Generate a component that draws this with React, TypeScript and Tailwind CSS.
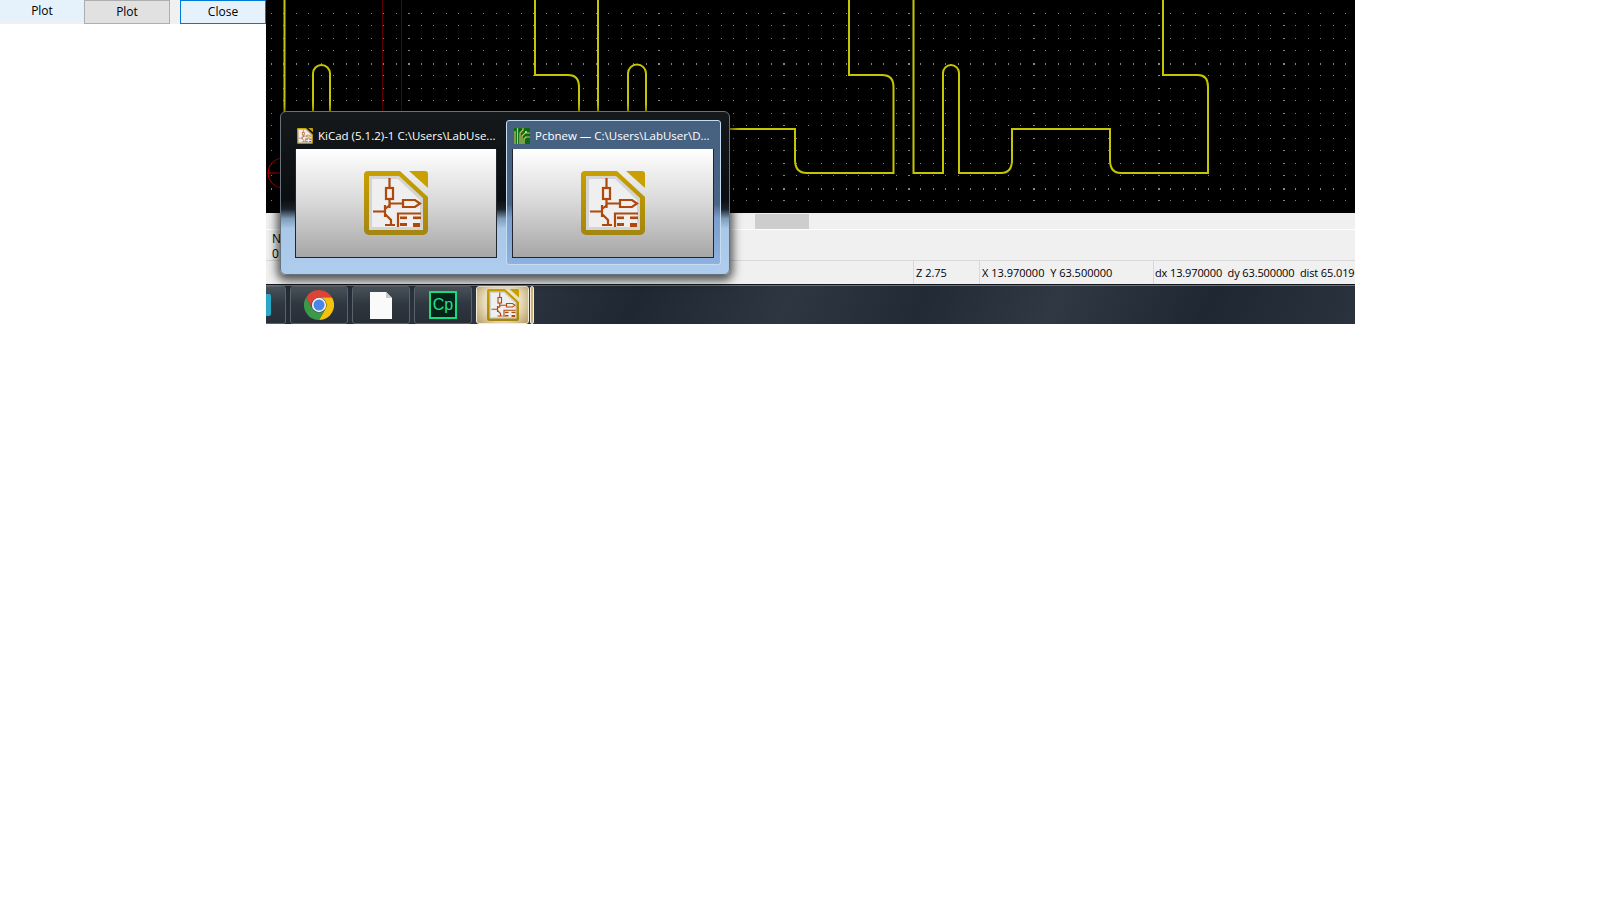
import React from "react";

const FONT = "font-['Open_Sans','Liberation_Sans',sans-serif]";

// kicad grid is 12.5px, every 10th column/row is drawn a bit heavier
const gridPath = () => {
  let d = "";
  for (let i = 0; i < 88; i++) {
    for (let j = 1; j < 18; j++) {
      const x = Math.round(5 + i * 12.49);
      const y = Math.round(j * 12.5);
      const w = i % 10 === 1 ? 2 : 1;
      const h = j % 10 === 5 ? 2 : 1;
      d += `M${x} ${y}h${w}v${h}h-${w}z`;
    }
  }
  return d;
};

const KicadIcon = ({ className }: { className: string }) => (
  <svg viewBox="0 0 64 64" className={className}>
    <defs>
      <linearGradient id="kicadGold" x1="0" y1="0" x2="0" y2="1">
        <stop offset="0" stopColor="#c9a000" />
        <stop offset="1" stopColor="#a38610" />
      </linearGradient>
    </defs>
    <path d="M4 0H36L64 26V59a5 5 0 0 1-5 5H5a5 5 0 0 1-5-5V4a4 4 0 0 1 4-4Z" fill="url(#kicadGold)" />
    <path d="M45 0H61a3 3 0 0 1 3 3V17Z" fill="#c9a000" />
    <path d="M5 5H35L59 27V59H5Z" fill="#d4d4d4" />
    <path d="M8 8H34L56 29V56H8Z" fill="#efefef" />
    <g fill="none" stroke="#b0480c" strokeWidth="2.2">
      <path d="M25.5 7V17M25.5 28V37M25 32.5H39" />
      <rect x="22" y="17" width="7" height="11" />
      <path d="M39 29H51L56 32.5L51 36H39Z" />
      <path d="M9 40.5H21M21 34V46M21 38L26 34M21 43L27 49V54M21 54H31" />
      <path d="M34 56V42.5H57" />
    </g>
    <g fill="#b0480c">
      <rect x="36" y="45.5" width="7" height="2.6" />
      <rect x="49" y="45.5" width="8" height="2.6" />
      <rect x="36" y="52" width="7" height="3" />
      <rect x="49" y="52" width="7" height="4" />
    </g>
  </svg>
);

const PcbIcon = () => (
  <svg viewBox="0 0 16 16" className="h-4 w-4 shrink-0">
    <rect width="16" height="16" fill="#0b6b14" />
    <path d="M1 16V3M3.5 16V0M6 16V5L9 2V0M8 16V8L11 5H16M11 9H16M10 16V11L12 9" fill="none" stroke="#c9c06a" strokeWidth="1.2" />
    <circle cx="12" cy="4" r="1" fill="#e8e2a0" />
  </svg>
);

const ChromeIcon = () => (
  <svg viewBox="0 0 48 48" className="h-[30px] w-[30px]">
    <path d="M24 0A24 24 0 0 1 44.8 12H24A12 12 0 0 0 13.6 30L3.2 12A24 24 0 0 1 24 0Z" fill="#db4437" />
    <path d="M44.8 12A24 24 0 0 1 24 48L34.4 30A12 12 0 0 0 24 12Z" fill="#f4c20d" />
    <path d="M3.2 12L13.6 30A12 12 0 0 0 34.4 30L24 48A24 24 0 0 1 3.2 12Z" fill="#3a9a4a" />
    <circle cx="24" cy="24" r="11.5" fill="#f1f1f1" />
    <circle cx="24" cy="24" r="8.8" fill="#4a86e8" />
  </svg>
);

const DocIcon = () => (
  <svg viewBox="0 0 22 27" className="h-[27px] w-[22px]">
    <path d="M0 0H16L22 6V27H0Z" fill="#fafafa" />
    <path d="M16 0V6H22Z" fill="#c9c9c9" />
  </svg>
);

const Preview = ({ title, icon, selected }: { title: string; icon: React.ReactNode; selected?: boolean }) => (
  <div
    className={
      selected
        ? "flex h-[145px] w-[215px] flex-col rounded-[3px] border border-[#c6dcf2] bg-[linear-gradient(180deg,#46607f_0%,#4a6485_58%,#7d9fcd_68%,#8fb1e0_100%)] pt-[7px] pl-[5px]"
        : "flex h-[145px] w-[215px] flex-col pt-2 pl-[5px]"
    }
  >
    <div className="ml-[2px] flex h-4 w-[200px] items-center gap-[5px] overflow-visible text-[11.5px] whitespace-nowrap text-white">
      {icon}
      <span>{title}</span>
    </div>
    <div className="mt-[5px] flex h-[109px] w-[202px] items-center justify-center border border-[#20262c] border-t-0 bg-[linear-gradient(180deg,#ffffff_0%,#d8d8d8_50%,#a6a6a6_100%)]">
      <KicadIcon className="h-16 w-16" />
    </div>
  </div>
);

const TaskButton = ({ children, className }: { children?: React.ReactNode; className: string }) => (
  <div
    className={`flex h-[38px] shrink-0 items-center justify-center rounded-[3px] border border-[#5a626a] bg-[linear-gradient(180deg,#4a525a_0%,#2f3740_45%,#272e36_100%)] ${className}`}
  >
    {children}
  </div>
);

export default function App() {
  return (
    <div className={`flex min-h-[910px] w-[1610px] items-start bg-white text-[12px] text-black ${FONT}`}>
      {/* Plot dialog buttons left over on the left */}
      <div className="flex h-[24px] w-[266px] bg-[#f0f0f0]">
        <div className="flex h-[22px] w-[84px] items-center justify-center bg-[#e5f1fb]">Plot</div>
        <button className="h-[24px] w-[86px] border border-[#adadad] bg-[#e1e1e1]">Plot</button>
        <button className="ml-[10px] h-[24px] w-[86px] border border-[#0078d7] bg-[#e5f1fb]">Close</button>
      </div>

      <div className="relative flex h-[324px] w-[1089px] flex-col">
        {/* pcb canvas */}
        <svg viewBox="0 0 1089 213" className="h-[213px] w-[1089px] shrink-0 bg-black">
          <path d={gridPath()} fill="#858585" shapeRendering="crispEdges" />
          <path d="M116.5 0V112M135.5 0V112" stroke="#5e0000" fill="none" />
          <path d="M17 158A15 15 0 0 0 17 188M2 173H15" stroke="#c80000" fill="none" />
          <g fill="none" stroke="#c6c600" strokeWidth="2">
            <path d="M18.5 0V112" />
            <path d="M47 112V73.5A8.5 8.5 0 0 1 64 73.5V112" />
            <path d="M269 0V75H302Q313 75 313 87V112" />
            <path d="M332 0V112" />
            <path d="M362 112V73.5A9 9 0 0 1 380 73.5V112" />
            <path d="M440 129H529V160Q529 173 541 173H627.5V87Q627.5 75 616 75H583V0" />
            <path d="M647.5 0V173H677V73A8 8 0 0 1 693 73V173H735Q746 173 746 160V129H844V160Q844 173 855 173H942V87Q942 75 932 75H897V0" />
          </g>
        </svg>

        {/* scrollbar */}
        <div className="h-[17px] shrink-0 border-b border-white bg-[#f0f0f0] pl-[489px]">
          <div className="mt-px h-[15px] w-[54px] bg-[#cdcdcd]" />
        </div>

        {/* message panel */}
        <div className="h-[31px] shrink-0 border-b border-[#d9d9d9] bg-[#f0f0f0] pt-[1px] pl-[6px] leading-[15px]">
          <div>N</div>
          <div>0</div>
        </div>

        {/* status bar */}
        <div className="flex h-[23px] shrink-0 items-center overflow-hidden bg-[#f0f0f0] text-[11px] whitespace-pre">
          <div className="w-[647px] shrink-0" />
          <div className="h-full w-[66px] shrink-0 border-l border-[#d9d9d9] pl-[2px] leading-[24px]">Z 2.75</div>
          <div className="h-full w-[174px] shrink-0 border-l border-[#d9d9d9] pl-[2px] leading-[24px]">X 13.970000  Y 63.500000</div>
          <div className="h-full flex-1 border-l border-[#d9d9d9] pl-[1px] leading-[24px] tracking-[-0.12px]">dx 13.970000  dy 63.500000  dist 65.019</div>
        </div>

        {/* taskbar */}
        <div className="flex h-[40px] shrink-0 items-end gap-[4px] overflow-hidden border-t border-[#14181c] bg-[linear-gradient(115deg,#222b35_0%,#2c3540_22%,#1f2832_34%,#2d3641_48%,#222b35_60%,#2f3843_72%,#1f2832_86%,#2a333d_100%)] shadow-[inset_0_1px_0_#66717b]">
          <TaskButton className="w-[20px] justify-start rounded-l-none border-l-0">
            <div className="h-[22px] w-[5px] rounded-r-[2px] bg-[#2aa8c8]" />
          </TaskButton>
          <TaskButton className="w-[58px]">
            <ChromeIcon />
          </TaskButton>
          <TaskButton className="w-[58px]">
            <DocIcon />
          </TaskButton>
          <TaskButton className="w-[58px]">
            <div className="flex h-7 w-7 items-center justify-center border-2 border-[#17dd80] bg-[#04241a] font-['Liberation_Sans',sans-serif] text-[16px] leading-none text-[#22e08c]">
              Cp
            </div>
          </TaskButton>
          <div className="flex h-[38px] w-[53px] shrink-0 items-center justify-center rounded-[3px] border border-[#f2ecd8] bg-[radial-gradient(circle_at_50%_40%,#f4f0e6_0%,#e9dcbc_55%,#b59c62_100%)]">
            <KicadIcon className="h-8 w-8" />
          </div>
          <div className="-ml-[3px] h-[38px] w-[4px] shrink-0 rounded-[2px] border border-[#f2ecd8] bg-[#c9b27e]" />
        </div>

        {/* aero peek popup */}
        <div className="absolute top-[111px] left-[14px] flex h-[164px] w-[450px] gap-px rounded-[6px] border border-[#66727c] bg-[linear-gradient(180deg,#15191b_0%,#0b0e10_54%,#1a232b_60%,#7f9dba_66%,#a9c8e8_72%,#aecdee_100%)] pt-2 pl-[9px] shadow-[0_3px_10px_3px_rgba(0,0,0,0.65)]">
          <Preview title="KiCad (5.1.2)-1 C:\Users\LabUse..." icon={<KicadIcon className="h-4 w-4 shrink-0" />} />
          <Preview selected title="Pcbnew — C:\Users\LabUser\D..." icon={<PcbIcon />} />
        </div>
      </div>
    </div>
  );
}
